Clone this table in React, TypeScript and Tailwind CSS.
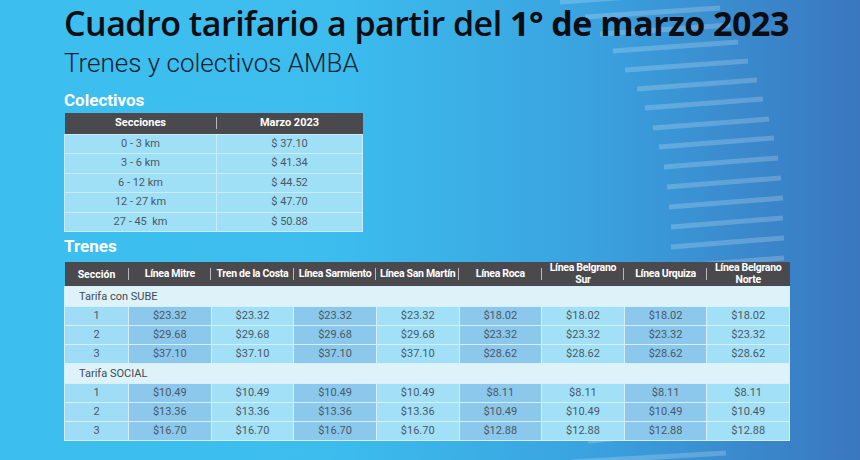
import React from "react";

const lineas: string[][] = [
  ["Línea Mitre"],
  ["Tren de la Costa"],
  ["Línea Sarmiento"],
  ["Línea San Martín"],
  ["Línea Roca"],
  ["Línea Belgrano", "Sur"],
  ["Línea Urquiza"],
  ["Línea Belgrano", "Norte"],
];

const sube = [
  ["23.32", "18.02"],
  ["29.68", "23.32"],
  ["37.10", "28.62"],
];

const social = [
  ["10.49", "8.11"],
  ["13.36", "10.49"],
  ["16.70", "12.88"],
];

const colectivos = [
  ["0 - 3 km", "$ 37.10"],
  ["3 - 6 km", "$ 41.34"],
  ["6 - 12 km", "$ 44.52"],
  ["12 - 27 km", "$ 47.70"],
  ["27 - 45  km", "$ 50.88"],
];

// franjas decorativas del fondo (x izq, y izq, x der)
const stripes: [number, number, number][] = [
  [560, 2, 685],
  [585, 17, 720],
  [600, 34, 730],
  [613, 51, 738],
  [625, 70, 748],
  [637, 89, 757],
  [645, 108, 763],
  [653, 128, 769],
  [659, 147, 774],
  [664, 167, 778],
  [667, 187, 781],
  [669, 207, 783],
  [671, 227, 783],
  [671, 247, 784],
  [670, 267, 784],
  [588, 441, 690],
  [572, 462, 726],
];

function Sep() {
  return <span className="absolute left-[-1px] top-1/2 -translate-y-1/2 h-[12px] w-px bg-[#b9b9bd]" />;
}

function TarifaRows({ titulo, data }: { titulo: string; data: string[][] }) {
  return (
    <>
      <tr>
        <td colSpan={9} className="h-[20px] border border-[#d4f0fb] bg-[#def2fa] pl-[14px] text-left text-[#3e4a55]">
          {titulo}
        </td>
      </tr>
      {data.map((row, i) => (
        <tr key={i}>
          <td className="h-[19px] border border-[#d4f0fb] bg-[#9fdcf5] text-center">{i + 1}</td>
          {lineas.map((_, c) => (
            <td
              key={c}
              className={`h-[19px] border border-[#d4f0fb] text-center ${c % 2 === 0 ? "bg-[#8bc8ec]" : "bg-[#a2e0f8]"}`}
            >
              ${c < 4 ? row[0] : row[1]}
            </td>
          ))}
        </tr>
      ))}
    </>
  );
}

export default function App() {
  return (
    <div className="relative w-[860px] h-[460px] overflow-hidden bg-[linear-gradient(90deg,#3cbfef_0%,#3cbdee_38%,#3aa3e0_68%,#3a77bf_100%)] font-['Roboto',sans-serif]">
      <svg className="absolute inset-0" width={860} height={460}>
        {stripes.map(([x1, y1, x2], i) => (
          <line key={i} x1={x1} y1={y1} x2={x2} y2={y1 - 9} stroke="#ffffff" strokeOpacity={0.2} strokeWidth={5} />
        ))}
      </svg>

      <div className="relative flex flex-col pl-[64px]">
        <h1 className="pt-[4px] font-['Open_Sans',sans-serif] text-[34px] leading-[38px] font-semibold tracking-[-0.5px] text-[#0b0d12] whitespace-nowrap">
          Cuadro tarifario a partir del <span className="font-bold">1° de marzo 2023</span>
        </h1>
        <p className="mt-[6px] text-[26px] leading-[30px] font-light text-[#142230]">Trenes y colectivos AMBA</p>

        <h2 className="mt-[12px] text-[17px] leading-[20px] font-bold text-white">Colectivos</h2>
        <table className="mt-[3px] w-[298px] table-fixed border-collapse text-[11px] text-[#4a5866]">
          <colgroup>
            <col className="w-[152px]" />
            <col className="w-[146px]" />
          </colgroup>
          <thead>
            <tr className="h-[21px] bg-[#4a494e] text-white">
              <th className="font-bold">Secciones</th>
              <th className="relative font-bold">
                <Sep />
                Marzo 2023
              </th>
            </tr>
          </thead>
          <tbody>
            {colectivos.map(([s, p]) => (
              <tr key={s}>
                <td className="h-[19.6px] border border-[#c9edfb] bg-[#a0e0f7] text-center whitespace-pre">{s}</td>
                <td className="h-[19.6px] border border-[#c9edfb] bg-[#a0e0f7] text-center">{p}</td>
              </tr>
            ))}
          </tbody>
        </table>

        <h2 className="mt-[4px] text-[17px] leading-[20px] font-bold text-white">Trenes</h2>
        <table className="mt-[6px] w-[726px] table-fixed border-collapse text-[11px] text-[#4a5866]">
          <colgroup>
            <col className="w-[64px]" />
            {lineas.map((_, i) => (
              <col key={i} />
            ))}
          </colgroup>
          <thead>
            <tr className="h-[24px] bg-[#4a494e] text-white">
              <th className="text-[10.5px] font-bold">Sección</th>
              {lineas.map((l, i) => (
                <th key={i} className="relative text-[10.5px] font-bold leading-[12px] tracking-[-0.3px] whitespace-nowrap">
                  <Sep />
                  {l.map((t) => (
                    <div key={t}>{t}</div>
                  ))}
                </th>
              ))}
            </tr>
          </thead>
          <tbody>
            <TarifaRows titulo="Tarifa con SUBE" data={sube} />
            <TarifaRows titulo="Tarifa SOCIAL" data={social} />
          </tbody>
        </table>
      </div>
    </div>
  );
}
